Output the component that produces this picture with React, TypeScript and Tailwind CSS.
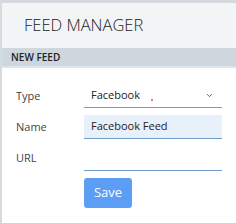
import { ChevronDown } from "lucide-react";

export default function App() {
  return (
    <div
      className="h-[223px] w-[236px] overflow-hidden border-t-[3px] border-l-2 border-t-[#d3d9df] border-l-[#d6dbe0] bg-white text-[#333]"
      style={{ fontFamily: '"Open Sans", "Segoe UI", sans-serif' }}
    >
      <div className="flex h-[45px] items-center bg-[#f3f4f6] pl-[22px] text-[16.5px] font-light text-[#222]">
        FEED MANAGER
      </div>
      <div className="flex h-[20px] items-center border-b-2 border-[#dfe4e9] bg-[#ced6de] pl-[9px] text-[10px] font-semibold text-[#222]">
        NEW FEED
      </div>

      <div className="flex flex-col pl-[14px] pt-[16px] text-[11px]">
        <div className="flex items-center">
          <span className="w-[68px] text-[#444]">Type</span>
          <div className="relative flex h-[24px] w-[138px] items-center border-b border-[#6f9cc8] pl-[7px] pr-2">
            <span className="text-[#222]">Facebook</span>
            <span className="absolute left-[67px] top-[15px] h-[2px] w-[2px] rounded-full bg-[#e2504c]" />
            <ChevronDown className="ml-auto h-[9px] w-[9px] text-[#555]" strokeWidth={2.5} />
          </div>
        </div>

        <div className="mt-[7px] flex items-center">
          <span className="w-[68px] text-[#444]">Name</span>
          <div className="flex h-[24px] w-[138px] items-center border-b border-[#6f9cc8] bg-[#e8f0fa] pl-[7px]">
            <span className="text-[#222]">Facebook Feed</span>
          </div>
        </div>

        <div className="mt-[7px] flex items-start">
          <span className="w-[68px] pt-[4px] text-[#444]">URL</span>
          <div className="h-[25px] w-[138px] border-b border-[#6f9cc8]" />
        </div>

        <div className="mt-[7px] pl-[68px]">
          <button className="flex h-[30px] w-[48px] items-center justify-center rounded-[3px] bg-[#5c9ef5] text-[13px] text-white">
            Save
          </button>
        </div>
      </div>
    </div>
  );
}
